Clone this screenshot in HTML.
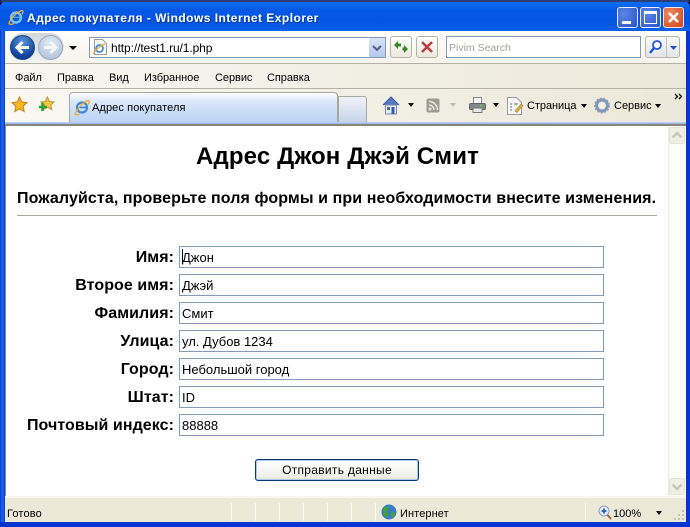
<!DOCTYPE html>
<html><head><meta charset="utf-8">
<style>
html,body{margin:0;padding:0;width:690px;height:527px;overflow:hidden;background:#000}
*{box-sizing:border-box}
body{font-family:"Liberation Sans",sans-serif;position:relative}
.a{position:absolute;white-space:nowrap}
.m{font-size:11px;color:#000;top:71px;line-height:14px;letter-spacing:-.05px}
.t{font-size:11px;color:#000;line-height:14px}
.l{position:absolute;right:516px;font-weight:bold;font-size:16px;line-height:20px;color:#000;white-space:nowrap;letter-spacing:.07px}
.i{position:absolute;left:179px;width:425px;height:22px;border:1px solid #7f9db9;background:#fff;font-size:13px;line-height:22px;padding-left:2px;color:#000;white-space:nowrap}
.tri{position:absolute;width:0;height:0;border-left:3.5px solid transparent;border-right:3.5px solid transparent;border-top:4px solid #000}
.sep{position:absolute;top:503px;width:1px;height:18px;background:#fbfaf5}
svg{position:absolute;overflow:visible}
</style></head><body>
<!-- window frame -->
<div class="a" style="left:0;top:0;width:690px;height:527px;background:#0831d9;border-radius:7px 7px 0 0"></div>
<div class="a" style="left:0;top:1px;width:690px;height:30px;border-radius:7px 7px 0 0;background:linear-gradient(#0a5fe8 0,#0b6cf4 8%,#0558e6 30%,#0554e2 70%,#0a60ec 100%)"></div>
<div class="a" style="left:0;top:0;width:690px;height:2px;background:#2a3f78;border-radius:7px 7px 0 0"></div>
<div class="a" style="left:0;top:31px;width:5px;height:496px;background:linear-gradient(90deg,#0a3bc8,#1a6af0 50%,#0538d8)"></div>
<div class="a" style="left:686px;top:31px;width:4px;height:496px;background:#0634d8"></div>
<div class="a" style="left:0;top:522px;width:690px;height:5px;background:#0634d0"></div>
<!-- IE logo title -->
<svg style="left:8px;top:9px" width="16" height="16" viewBox="0 0 16 16"><ellipse cx="8" cy="8.500" rx="5" ry="5" fill="none" stroke="#7cc4f8" stroke-width="2.400"/><rect x="5" y="7.600" width="7" height="1.600" fill="#4aa0e0"/><path d="M1 14C3 9 9 3 14 1.500 15.500 1.500 15 4 14 5.500M1 14c0 2 3 1.500 5 .5" fill="none" stroke="#f0b030" stroke-width="1.300"/></svg>
<div class="a" style="left:27px;top:10px;font-size:12px;font-weight:bold;line-height:16px;color:#fff;text-shadow:1px 1px #0a3aa0;letter-spacing:.47px">Адрес покупателя - Windows Internet Explorer</div>
<!-- window buttons -->
<div class="a" style="left:617px;top:7px;width:21px;height:21px;border:1px solid #e8eefc;border-radius:3px;background:radial-gradient(circle at 30% 30%,#5a86ea,#2a52c8)"></div>
<div class="a" style="left:622px;top:21px;width:9px;height:3px;background:#fff"></div>
<div class="a" style="left:640px;top:7px;width:21px;height:21px;border:1px solid #e8eefc;border-radius:3px;background:radial-gradient(circle at 30% 30%,#5a86ea,#2a52c8)"></div>
<div class="a" style="left:644px;top:11px;width:13px;height:13px;border:1px solid #fff;border-top:3px solid #fff"></div>
<div class="a" style="left:663px;top:7px;width:21px;height:21px;border:1px solid #f0e8e0;border-radius:3px;background:radial-gradient(circle at 30% 30%,#ec8a60,#d0451a)"></div>
<svg style="left:663px;top:7px" width="21" height="21"><path d="M6 6l9 9M15 6l-9 9" stroke="#fff" stroke-width="2.400"/></svg>
<!-- address row -->
<div class="a" style="left:5px;top:31px;width:681px;height:32px;background:linear-gradient(#fdfdfa,#f6f4ec)"></div>
<div class="a" style="left:5px;top:63px;width:681px;height:1px;background:#b5b2a5"></div>
<!-- back/forward -->
<div class="a" style="left:9px;top:33px;width:55px;height:28px;border-radius:14px;background:linear-gradient(#d4d6dc,#eef0f2)"></div>
<div class="a" style="left:10px;top:35px;width:25px;height:25px;border-radius:50%;background:radial-gradient(circle at 50% 25%,#5a94dc,#0d3f94 75%);border:1px solid #1a4a8a"></div>
<svg style="left:10px;top:35px" width="25" height="25"><path d="M19 12.500H8M12.500 7l-5.500 5.500 5.500 5.500" fill="none" stroke="#fff" stroke-width="3"/></svg>
<div class="a" style="left:38px;top:35px;width:25px;height:25px;border-radius:50%;background:radial-gradient(circle at 50% 30%,#e4ebf4,#b4c4dc 80%);border:1px solid #9ab"></div>
<svg style="left:38px;top:35px" width="25" height="25"><path d="M6 12.500h11M12.500 7l5.500 5.500-5.500 5.500" fill="none" stroke="#f4f6fa" stroke-width="3"/></svg>
<div class="tri" style="left:69px;top:46px;border-left-width:4px;border-right-width:4px"></div>
<!-- address box -->
<div class="a" style="left:89px;top:37px;width:297px;height:21px;background:#fff;border:1px solid #7f9db9"></div>
<svg style="left:92px;top:39px" width="16" height="17"><path d="M2.500.5h8l4 4v11h-12z" fill="#fff" stroke="#999"/><ellipse cx="7.500" cy="9.500" rx="3.500" ry="3.500" fill="none" stroke="#3a8ad8" stroke-width="1.700"/><path d="M1 15C4 10 9 6 13 5" fill="none" stroke="#f0a820" stroke-width="1.200"/></svg>
<div class="a t" style="left:111px;top:41px;font-size:12px;letter-spacing:-.1px">http://test1.ru/1.php</div>
<div class="a" style="left:369px;top:38px;width:16px;height:19px;background:linear-gradient(#d8e4f8,#b4c8f0);border-radius:1px"></div>
<svg style="left:369px;top:38px" width="16" height="19"><path d="M4 8l4 4 4-4" fill="none" stroke="#4d6185" stroke-width="2"/></svg>
<!-- refresh / stop -->
<div class="a" style="left:390px;top:36px;width:22px;height:22px;border:1px solid #b4b4a8;border-radius:3px;background:linear-gradient(#fff,#ece9de)"></div>
<svg style="left:390px;top:36px" width="22" height="22"><path d="M4 9l4-4v2.500h3V10.500H8V13zM18 13l-4 4V14.500h-1.500V11.500H14V9z" fill="#2e8a22"/></svg>
<div class="a" style="left:416px;top:36px;width:22px;height:22px;border:1px solid #b4b4a8;border-radius:3px;background:linear-gradient(#fff,#ece9de)"></div>
<svg style="left:416px;top:36px" width="22" height="22"><path d="M6 6l10 10M16 6L6 16" stroke="#c03a44" stroke-width="2.500"/></svg>
<!-- search -->
<div class="a" style="left:446px;top:36px;width:195px;height:22px;background:#fff;border:1px solid #7f9db9"></div>
<div class="a t" style="left:449px;top:41px;color:#a09f98;font-size:10.500px">Pivim Search</div>
<div class="a" style="left:645px;top:36px;width:35px;height:22px;border:1px solid #b4b4a8;border-radius:3px;background:linear-gradient(#fafafa,#e4e6ea)"></div>
<div class="a" style="left:666px;top:37px;width:1px;height:20px;background:#c0c0b8"></div>
<svg style="left:645px;top:36px" width="35" height="22"><circle cx="12" cy="9" r="4" fill="#fff" stroke="#1f55d8" stroke-width="1.800"/><path d="M9 12l-4 5" stroke="#1f55d8" stroke-width="2.400"/><path d="M25 10h7l-3.500 4z" fill="#2050c8"/></svg>
<!-- menu row -->
<div class="a" style="left:5px;top:64px;width:681px;height:24px;background:linear-gradient(90deg,#f7f6f1,#ece8d9)"></div>
<div class="a" style="left:5px;top:88px;width:681px;height:1px;background:#b5b2a5"></div>
<div class="a m" style="left:15px">Файл</div>
<div class="a m" style="left:57px">Правка</div>
<div class="a m" style="left:109px">Вид</div>
<div class="a m" style="left:144px">Избранное</div>
<div class="a m" style="left:215px">Сервис</div>
<div class="a m" style="left:267px">Справка</div>
<!-- tab row -->
<div class="a" style="left:5px;top:89px;width:681px;height:33px;background:linear-gradient(90deg,#f9f8f3,#ece8d9)"></div>
<div class="a" style="left:5px;top:122px;width:681px;height:2px;background:linear-gradient(#c4d4f8,#98b0e8)"></div>
<div class="a" style="left:5px;top:124px;width:681px;height:2px;background:#86867a"></div>
<svg style="left:11px;top:96px" width="18" height="18"><path d="M8.500 1l2.300 5 5.200.600-3.900 3.600 1.100 5.300-4.700-2.700-4.700 2.700 1.100-5.300L1 6.600 6.200 6z" fill="#f8b820" stroke="#c08020"/></svg>
<svg style="left:38px;top:96px" width="18" height="18"><path d="M9.500 1l2 4.500 4.500.500-3.300 3 1 4.500-4.200-2.300-4 2.300 1-4.500L3 6l4.500-.5z" fill="#f8c840" stroke="#c09030"/><path d="M4.500 7v8M1 11h8" stroke="#30a030" stroke-width="2.600"/></svg>
<!-- active tab -->
<div class="a" style="left:69px;top:92px;width:269px;height:30px;border:1px solid #a8a89c;border-bottom:0;border-radius:4px 4px 0 0;background:linear-gradient(#fdfdfe 0,#d8e6fa 30%,#bcd4f6 100%)"></div>
<div class="a" style="left:338px;top:96px;width:29px;height:26px;border:1px solid #a8a89c;border-bottom:0;border-radius:0 3px 0 0;background:linear-gradient(#f0f2f8,#c8d4ec)"></div>
<svg style="left:74px;top:99px" width="16" height="16"><ellipse cx="8" cy="8.500" rx="5" ry="5" fill="none" stroke="#3a8ad8" stroke-width="2.200"/><rect x="5" y="7.700" width="7" height="1.500" fill="#2a7ac8"/><path d="M1 15C4 9 9 3 14 1.500 16 1.500 15 4 14 5.500M1 15c0 1.500 3 1 5 0" fill="none" stroke="#f0a820" stroke-width="1.200"/></svg>
<div class="a t" style="left:92px;top:101px;font-size:11px;letter-spacing:.1px">Адрес покупателя</div>
<!-- command bar -->
<svg style="left:382px;top:96px" width="18" height="19"><path d="M1 9l8-8 8 8" fill="#5878c0" stroke="#3a5aa8"/><path d="M3.500 9h11v9h-11z" fill="#e4ecf4" stroke="#7a8aa0"/><rect x="9.500" y="11" width="3" height="7" fill="#3060b0"/><rect x="5" y="11" width="3" height="3" fill="#5a6a80"/></svg>
<div class="tri" style="left:408px;top:103px"></div>
<svg style="left:426px;top:98px" width="14" height="15"><rect x=".5" y=".5" width="13" height="14" rx="2" fill="#9c9c92"/><circle cx="4" cy="11" r="1.500" fill="#e8e8e0"/><path d="M3 7a5 5 0 0 1 5 5M3 3.500a8.500 8.500 0 0 1 8.500 8.500" fill="none" stroke="#e8e8e0" stroke-width="1.500"/></svg>
<div class="tri" style="left:450px;top:103px;border-top-color:#bdbcb2"></div>
<svg style="left:469px;top:97px" width="17" height="17"><rect x="4.500" y=".5" width="8" height="6" fill="#fff" stroke="#888"/><rect x=".5" y="6.500" width="16" height="6" rx="1.500" fill="#84888c" stroke="#60646a"/><rect x="4" y="11" width="9" height="4.500" fill="#e8e8e8" stroke="#777"/><rect x="11" y="8" width="3" height="1.500" fill="#60c060"/></svg>
<div class="tri" style="left:493px;top:103px"></div>
<svg style="left:507px;top:97px" width="17" height="18"><path d="M.5.500h9l5 5v12H.500z" fill="#f8f8f4" stroke="#9a9a9a"/><path d="M3 7h2M3 10h2M3 13h2M7 7h4" stroke="#607090"/><path d="M8 14l6-7 2 1.500-6 7z" fill="#e0b040" stroke="#a08030" stroke-width=".6"/></svg>
<div class="a t" style="left:527px;top:99px;letter-spacing:-.05px">Страница</div>
<div class="tri" style="left:581px;top:104px"></div>
<svg style="left:594px;top:97px" width="16" height="17"><circle cx="8" cy="8.500" r="5.500" fill="none" stroke="#7e98b8" stroke-width="3"/><circle cx="8" cy="8.500" r="7.200" fill="none" stroke="#8ca0b8" stroke-width="1.600" stroke-dasharray="2 1.500"/><circle cx="8" cy="8.500" r="2.800" fill="#f4f2e8"/></svg>
<div class="a t" style="left:614px;top:99px">Сервис</div>
<div class="tri" style="left:655px;top:104px"></div>
<svg style="left:674px;top:93px" width="9" height="7"><path d="M1 1l2.500 2.500L1 6M5 1l2.500 2.500L5 6" fill="none" stroke="#000" stroke-width="1.300"/></svg>
<!-- content -->
<div class="a" style="left:5px;top:126px;width:1px;height:370px;background:#86867a"></div>
<div class="a" style="left:6px;top:126px;width:680px;height:370px;background:#fff"></div>
<div class="a" style="left:668px;top:126px;width:18px;height:370px;background:#fdfdf8;border-left:1px solid #eeede4"></div>
<div class="a" style="left:669px;top:127px;width:16px;height:17px;background:#f0efe6;border:1px solid #e4e3da;border-radius:2px"></div>
<svg style="left:669px;top:127px" width="16" height="17"><path d="M3.500 10.500L8 6l4.500 4.500" fill="none" stroke="#c8c8be" stroke-width="2.400"/></svg>
<div class="a" style="left:669px;top:478px;width:16px;height:17px;background:#f0efe6;border:1px solid #e4e3da;border-radius:2px"></div>
<svg style="left:669px;top:478px" width="16" height="17"><path d="M3.500 6.500L8 11l4.500-4.500" fill="none" stroke="#c8c8be" stroke-width="2.400"/></svg>
<div class="a" style="left:196px;top:142px;font-size:24px;font-weight:bold;line-height:30px;color:#000;letter-spacing:.15px">Адрес Джон Джэй Смит</div>
<div class="a" style="left:17px;top:189px;font-size:16px;font-weight:bold;line-height:20px;color:#000;letter-spacing:.1px">Пожалуйста, проверьте поля формы и при необходимости внесите изменения.</div>
<div class="a" style="left:17px;top:215px;width:640px;height:1px;background:#aca899"></div>
<div class="l" style="top:248px">Имя:</div><div class="i" style="top:246px">Джон</div>
<div class="l" style="top:276px">Второе имя:</div><div class="i" style="top:274px">Джэй</div>
<div class="l" style="top:304px">Фамилия:</div><div class="i" style="top:302px">Смит</div>
<div class="l" style="top:332px">Улица:</div><div class="i" style="top:330px">ул. Дубов 1234</div>
<div class="l" style="top:360px">Город:</div><div class="i" style="top:358px">Небольшой город</div>
<div class="l" style="top:388px">Штат:</div><div class="i" style="top:386px">ID</div>
<div class="l" style="top:416px">Почтовый индекс:</div><div class="i" style="top:414px">88888</div>
<div class="a" style="left:182px;top:249px;width:1px;height:15px;background:#000"></div>
<div class="a" style="left:255px;top:459px;width:164px;height:22px;border:1px solid #003c74;border-radius:3px;background:linear-gradient(#fff,#f0f0ea 85%,#dcdcd0);box-shadow:inset 0 0 0 1px #b0c8ec;text-align:center;font-size:12px;line-height:20px;color:#000;letter-spacing:.3px">Отправить данные</div>
<!-- status bar -->
<div class="a" style="left:5px;top:496px;width:681px;height:26px;background:#ece9d8;border-top:2px solid #f8f6ee"></div>
<div class="a t" style="left:7px;top:507px;letter-spacing:.15px">Готово</div>
<div class="sep" style="left:231px"></div><div class="sep" style="left:255px"></div><div class="sep" style="left:279px"></div><div class="sep" style="left:303px"></div><div class="sep" style="left:327px"></div><div class="sep" style="left:351px"></div><div class="sep" style="left:375px"></div><div class="sep" style="left:585px"></div>
<svg style="left:381px;top:504px" width="16" height="16"><circle cx="8" cy="8" r="7.500" fill="#3a7ac8"/><path d="M3 3c3-1 5 0 5 2s-2 1-2 3 2 2 1 5c-2 1-4-1-5-3zM10 8c2-1 4 0 4 2s-2 3-3 3-2-3-1-5z" fill="#40a040"/></svg>
<div class="a t" style="left:400px;top:507px;letter-spacing:.1px">Интернет</div>
<svg style="left:598px;top:505px" width="14" height="15"><circle cx="6" cy="6" r="5" fill="#e4ecf8" stroke="#8a9ab8"/><path d="M3.500 6h5M6 3.500v5" stroke="#2060c0" stroke-width="1.800"/><path d="M9.500 10l3.500 4" stroke="#a06830" stroke-width="2"/></svg>
<div class="a t" style="left:613px;top:507px">100%</div>
<div class="tri" style="left:656px;top:511px"></div>
<svg style="left:674px;top:510px" width="11" height="11"><g fill="#c4c2b4"><rect x="8" y="0" width="2" height="2"/><rect x="4" y="4" width="2" height="2"/><rect x="8" y="4" width="2" height="2"/><rect x="0" y="8" width="2" height="2"/><rect x="4" y="8" width="2" height="2"/><rect x="8" y="8" width="2" height="2"/></g></svg>
</body></html>
